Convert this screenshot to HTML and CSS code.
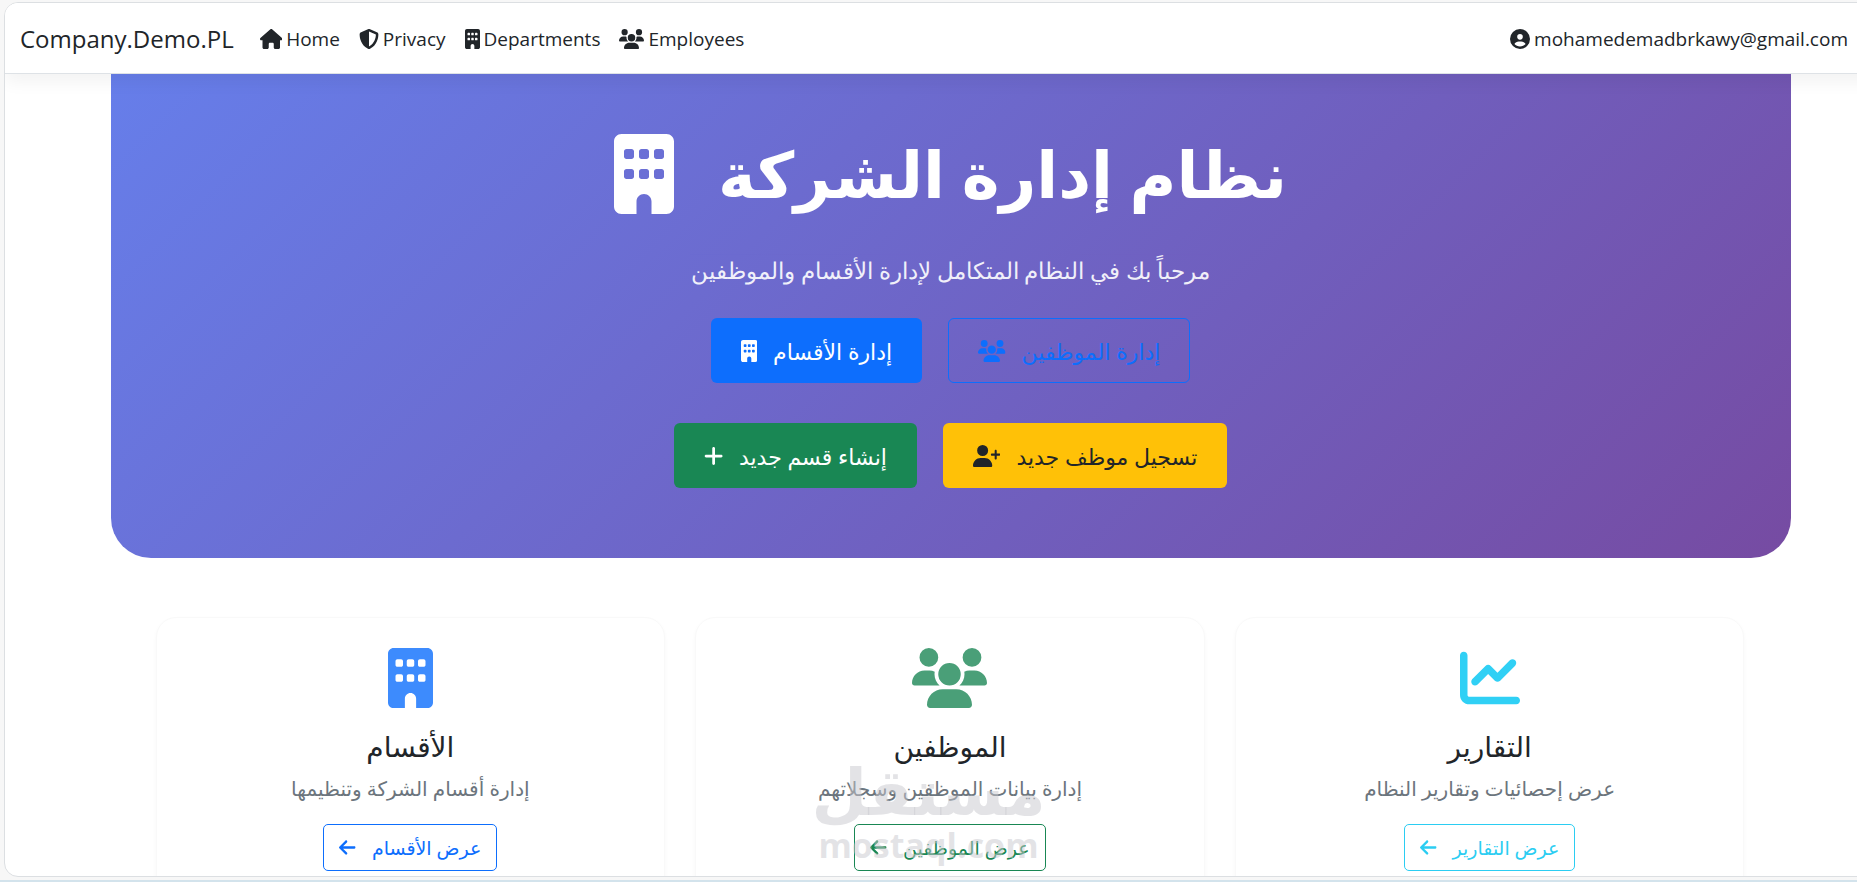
FILE: index.html
```
<!DOCTYPE html>
<html lang="en">
<head>
    <meta charset="utf-8">
    <title>Company.Demo.PL</title>
    <link rel="stylesheet" href="styles.css">
</head>
<body>
    <svg class="sprite" aria-hidden="true">
        <symbol id="house" viewBox="0 0 576 512"><path d="M575.8 255.5c0 18-15 32.1-32 32.1h-32l.7 160.2c0 2.7-.2 5.4-.5 8.1V472c0 22.1-17.9 40-40 40H456c-1.1 0-2.2 0-3.3-.1c-1.4 .1-2.8 .1-4.2 .1H416 392c-22.1 0-40-17.9-40-40V448 384c0-17.7-14.3-32-32-32H256c-17.7 0-32 14.3-32 32v64 24c0 22.1-17.9 40-40 40H160 128.1c-1.5 0-3-.1-4.5-.2c-1.2 .1-2.4 .2-3.6 .2H104c-22.1 0-40-17.9-40-40V360c0-.9 0-1.9 .1-2.8V287.6H32c-18 0-32-14-32-32.1c0-9 3-17 10-24L266.4 8c7-7 15-8 22-8s15 2 21 7L564.8 231.5c8 7 12 15 11 24z"/></symbol>
        <symbol id="shield" viewBox="0 0 512 512"><path d="M256 0c4.6 0 9.2 1 13.4 2.9L457.7 82.8c22 9.3 38.4 31 38.3 57.2c-.5 99.2-41.3 280.7-213.6 363.2c-16.7 8-36.1 8-52.8 0C57.3 420.7 16.5 239.2 16 140c-.1-26.2 16.3-47.9 38.3-57.2L242.7 2.9C246.8 1 251.4 0 256 0zm0 66.8V444.8C394 378 431.1 230.1 432 141.4L256 66.8l0 0z"/></symbol>
        <symbol id="building" viewBox="0 0 384 512"><path d="M48 0C21.5 0 0 21.5 0 48V464c0 26.5 21.5 48 48 48h96V432c0-26.5 21.5-48 48-48s48 21.5 48 48v80h96c26.5 0 48-21.5 48-48V48c0-26.5-21.5-48-48-48H48zM64 240c0-8.8 7.2-16 16-16h32c8.8 0 16 7.2 16 16v32c0 8.8-7.2 16-16 16H80c-8.8 0-16-7.2-16-16V240zm112-16h32c8.8 0 16 7.2 16 16v32c0 8.8-7.2 16-16 16H176c-8.8 0-16-7.2-16-16V240c0-8.8 7.2-16 16-16zm80 16c0-8.8 7.2-16 16-16h32c8.8 0 16 7.2 16 16v32c0 8.8-7.2 16-16 16H272c-8.8 0-16-7.2-16-16V240zM80 96h32c8.8 0 16 7.2 16 16v32c0 8.8-7.2 16-16 16H80c-8.8 0-16-7.2-16-16V112c0-8.8 7.2-16 16-16zm80 16c0-8.8 7.2-16 16-16h32c8.8 0 16 7.2 16 16v32c0 8.8-7.2 16-16 16H176c-8.8 0-16-7.2-16-16V112zM272 96h32c8.8 0 16 7.2 16 16v32c0 8.8-7.2 16-16 16H272c-8.8 0-16-7.2-16-16V112c0-8.8 7.2-16 16-16z"/></symbol>
        <symbol id="users" viewBox="0 0 640 512"><path d="M144 0a80 80 0 1 1 0 160A80 80 0 1 1 144 0zM512 0a80 80 0 1 1 0 160A80 80 0 1 1 512 0zM0 298.7C0 239.8 47.8 192 106.7 192h42.7c15.9 0 31 3.5 44.6 9.7c-1.3 7.2-1.9 14.7-1.9 22.3c0 38.2 16.8 72.5 43.3 96c-.2 0-.4 0-.7 0H21.3C9.6 320 0 310.4 0 298.7zM405.3 320c-.2 0-.4 0-.7 0c26.6-23.5 43.3-57.8 43.3-96c0-7.6-.7-15-1.9-22.3c13.6-6.3 28.7-9.7 44.6-9.7h42.7C592.2 192 640 239.8 640 298.7c0 11.8-9.6 21.3-21.3 21.3H405.3zM224 224a96 96 0 1 1 192 0 96 96 0 1 1 -192 0zM128 485.3C128 411.7 187.7 352 261.3 352H378.7C452.3 352 512 411.7 512 485.3c0 14.7-11.9 26.7-26.7 26.7H154.7c-14.7 0-26.7-11.9-26.7-26.7z"/></symbol>
        <symbol id="user-plus" viewBox="0 0 640 512"><path d="M96 128a128 128 0 1 1 256 0A128 128 0 1 1 96 128zM0 482.3C0 383.8 79.8 304 178.3 304h91.4C368.2 304 448 383.8 448 482.3c0 16.4-13.3 29.7-29.7 29.7H29.7C13.3 512 0 498.7 0 482.3zM504 312V248H440c-13.3 0-24-10.7-24-24s10.7-24 24-24h64V136c0-13.3 10.7-24 24-24s24 10.7 24 24v64h64c13.3 0 24 10.7 24 24s-10.7 24-24 24H552v64c0 13.3-10.7 24-24 24s-24-10.7-24-24z"/></symbol>
        <symbol id="plus" viewBox="0 0 448 512"><path d="M256 80c0-17.7-14.3-32-32-32s-32 14.3-32 32V224H48c-17.7 0-32 14.3-32 32s14.3 32 32 32H192V432c0 17.7 14.3 32 32 32s32-14.3 32-32V288H400c17.7 0 32-14.3 32-32s-14.3-32-32-32H256V80z"/></symbol>
        <symbol id="arrow-left" viewBox="0 0 448 512"><path d="M9.4 233.4c-12.5 12.5-12.5 32.8 0 45.3l160 160c12.5 12.5 32.8 12.5 45.3 0s12.5-32.8 0-45.3L109.2 288 416 288c17.7 0 32-14.3 32-32s-14.3-32-32-32l-306.7 0L214.6 118.6c12.5-12.5 12.5-32.8 0-45.3s-32.8-12.5-45.3 0l-160 160z"/></symbol>
        <symbol id="chart" viewBox="0 0 512 512"><path d="M64 64c0-17.7-14.3-32-32-32S0 46.3 0 64V400c0 44.2 35.8 80 80 80H480c17.7 0 32-14.3 32-32s-14.3-32-32-32H80c-8.8 0-16-7.2-16-16V64zm406.6 86.6c12.5-12.5 12.5-32.8 0-45.3s-32.8-12.5-45.3 0L320 210.7l-57.4-57.4c-12.5-12.5-32.8-12.5-45.3 0l-112 112c-12.5 12.5-12.5 32.8 0 45.3s32.8 12.5 45.3 0L240 221.3l57.4 57.4c12.5 12.5 32.8 12.5 45.3 0l128-128z"/></symbol>
        <symbol id="user" viewBox="0 0 512 512"><path d="M399 384.2C376.9 345.8 335.4 320 288 320H224c-47.4 0-88.9 25.8-111 64.2c35.2 39.2 86.2 63.8 143 63.8s107.8-24.7 143-63.8zM0 256a256 256 0 1 1 512 0A256 256 0 1 1 0 256zm256 16a72 72 0 1 0 0-144 72 72 0 1 0 0 144z"/></symbol>
    </svg>

    <div class="window">
        <header class="navbar">
            <a class="brand" href="#">Company.Demo.PL</a>
            <nav class="nav-links">
                <a href="#"><svg class="icon" viewBox="0 0 576 512"><use href="#house"/></svg>Home</a>
                <a href="#"><svg class="icon" viewBox="0 0 512 512"><use href="#shield"/></svg>Privacy</a>
                <a href="#"><svg class="icon" viewBox="0 0 384 512"><use href="#building"/></svg>Departments</a>
                <a href="#"><svg class="icon" viewBox="0 0 640 512"><use href="#users"/></svg>Employees</a>
            </nav>
            <a class="account" href="#"><svg class="icon" viewBox="0 0 512 512"><use href="#user"/></svg>mohamedemadbrkawy@gmail.com</a>
        </header>

        <main class="container">
            <section class="hero">
                <h1><svg class="icon" viewBox="0 0 384 512"><use href="#building"/></svg><span dir="rtl" lang="ar">نظام إدارة الشركة</span></h1>
                <p class="lead" dir="rtl" lang="ar">مرحباً بك في النظام المتكامل لإدارة الأقسام والموظفين</p>
                <div class="buttons">
                    <a class="btn btn-lg primary" href="#"><svg class="icon" viewBox="0 0 384 512"><use href="#building"/></svg><span dir="rtl" lang="ar">إدارة الأقسام</span></a>
                    <a class="btn btn-lg outline-primary" href="#"><svg class="icon" viewBox="0 0 640 512"><use href="#users"/></svg><span dir="rtl" lang="ar">إدارة الموظفين</span></a>
                </div>
                <div class="buttons">
                    <a class="btn btn-lg success" href="#"><svg class="icon" viewBox="0 0 448 512"><use href="#plus"/></svg><span dir="rtl" lang="ar">إنشاء قسم جديد</span></a>
                    <a class="btn btn-lg warning" href="#"><svg class="icon" viewBox="0 0 640 512"><use href="#user-plus"/></svg><span dir="rtl" lang="ar">تسجيل موظف جديد</span></a>
                </div>
            </section>

            <section class="cards">
                <article class="card">
                    <svg class="icon card-icon blue" viewBox="0 0 384 512"><use href="#building"/></svg>
                    <h2 dir="rtl" lang="ar">الأقسام</h2>
                    <p dir="rtl" lang="ar">إدارة أقسام الشركة وتنظيمها</p>
                    <a class="btn outline-primary" href="#"><svg class="icon" viewBox="0 0 448 512"><use href="#arrow-left"/></svg><span dir="rtl" lang="ar">عرض الأقسام</span></a>
                </article>
                <article class="card">
                    <svg class="icon card-icon green" viewBox="0 0 640 512"><use href="#users"/></svg>
                    <h2 dir="rtl" lang="ar">الموظفين</h2>
                    <p dir="rtl" lang="ar">إدارة بيانات الموظفين وسجلاتهم</p>
                    <a class="btn outline-success" href="#"><svg class="icon" viewBox="0 0 448 512"><use href="#arrow-left"/></svg><span dir="rtl" lang="ar">عرض الموظفين</span></a>
                </article>
                <article class="card">
                    <svg class="icon card-icon cyan" viewBox="0 0 512 512"><use href="#chart"/></svg>
                    <h2 dir="rtl" lang="ar">التقارير</h2>
                    <p dir="rtl" lang="ar">عرض إحصائيات وتقارير النظام</p>
                    <a class="btn outline-info" href="#"><svg class="icon" viewBox="0 0 448 512"><use href="#arrow-left"/></svg><span dir="rtl" lang="ar">عرض التقارير</span></a>
                </article>
            </section>
        </main>
    </div>

    <div class="watermark">
        <span class="mark-ar" dir="rtl" lang="ar">مستقل</span>
        <span class="mark-en">mostaql.com</span>
    </div>
</body>
</html>
```
FILE: styles.css
```
* {
    margin: 0;
    padding: 0;
    box-sizing: border-box;
}

body {
    font-family: "Open Sans", "DejaVu Sans", sans-serif;
    font-size: 19px;
    line-height: 30px;
    color: #212529;
    background-color: #f7f7f7;
    height: 100vh;
    padding: 2px 0 3px 4px;
    border-bottom: 2px solid #d3e3ec;
    overflow: hidden;
    position: relative;
}

a {
    color: inherit;
    text-decoration: none;
}

.sprite {
    display: none;
}

.icon {
    height: 1em;
    width: auto;
    fill: currentColor;
    flex: none;
}

/* the window runs past the right edge of the screen */
.window {
    height: 100%;
    margin-right: -40px;
    background-color: white;
    border: 1px solid #dcdfe2;
    border-radius: 14px;
    overflow: hidden;
}

.navbar {
    display: flex;
    align-items: center;
    height: 71px;
    padding: 2px 48px 0 15px;
    background-color: white;
    border-bottom: 1px solid #dee2e6;
    box-shadow: 0 8px 16px rgba(0, 0, 0, 0.05);
    position: relative;
}

.brand {
    font-size: 24px;
    margin-right: 26px;
}

.nav-links {
    display: flex;
    gap: 19px;
    flex: 1;
}

.nav-links a,
.account {
    display: flex;
    align-items: center;
    gap: 4px;
}

.nav-links .icon,
.account .icon {
    height: 20px;
}

.container {
    max-width: 1680px;
    margin: 0 auto;
}

.hero {
    padding: 40px 40px 70px;
    color: white;
    text-align: center;
    background: linear-gradient(135deg, #667eea 0%, #764ba2 100%);
    border-radius: 0 0 40px 40px;
}

.hero h1 {
    display: flex;
    justify-content: center;
    align-items: center;
    gap: 44px;
    font-size: 64px;
    line-height: 120px;
    font-weight: bold;
    margin-bottom: 16px;
}

.hero h1 .icon {
    height: 80px;
}

.lead {
    font-size: 23px;
    font-weight: 300;
    line-height: 40px;
    margin-bottom: 28px;
    opacity: 0.9;
}

.buttons {
    display: flex;
    justify-content: center;
    gap: 26px;
}

.buttons + .buttons {
    margin-top: 40px;
}

.btn {
    display: inline-flex;
    align-items: center;
    gap: 16px;
    height: 47px;
    padding: 0 15px;
    border: 1px solid transparent;
    border-radius: 5px;
}

.btn-lg {
    height: 65px;
    padding: 0 29px;
    font-size: 22px;
    border-radius: 6px;
}

.primary {
    background-color: #0d6efd;
}

.success {
    background-color: #198754;
}

.warning {
    background-color: #ffc107;
    color: #212529;
}

.outline-primary {
    color: #0d6efd;
    border-color: #0d6efd;
}

.outline-success {
    color: #198754;
    border-color: #198754;
}

.outline-info {
    color: #2bcdf2;
    border-color: #2bcdf2;
}

.cards {
    display: grid;
    grid-template-columns: repeat(3, 1fr);
    gap: 30px;
    padding: 59px 46px 0 45px;
}

.card {
    display: flex;
    flex-direction: column;
    align-items: center;
    height: 320px;
    padding-top: 30px;
    border: 1px solid #f9f9f9;
    border-radius: 20px;
    box-shadow: 0 2px 4px rgba(0, 0, 0, 0.03);
}

.card-icon {
    height: 60px;
    margin-bottom: 20px;
}

.blue {
    color: #3d8bfd;
}

.green {
    color: #4a9f78;
}

.cyan {
    color: #30d0f5;
}

.card h2 {
    font-size: 28px;
    font-weight: 500;
    line-height: 36px;
    margin-bottom: 10px;
}

.card p {
    font-size: 20px;
    color: #6c757d;
    margin-bottom: 20px;
}

.watermark {
    position: absolute;
    left: 817px;
    bottom: 17px;
    width: 223px;
    display: flex;
    flex-direction: column;
    align-items: center;
    font-weight: bold;
    color: rgba(200, 200, 205, 0.5);
    pointer-events: none;
}

.mark-ar {
    font-size: 64px;
    line-height: 72px;
}

.mark-en {
    font-family: "Open Sans", sans-serif;
    font-size: 34px;
    line-height: 36px;
}
```
